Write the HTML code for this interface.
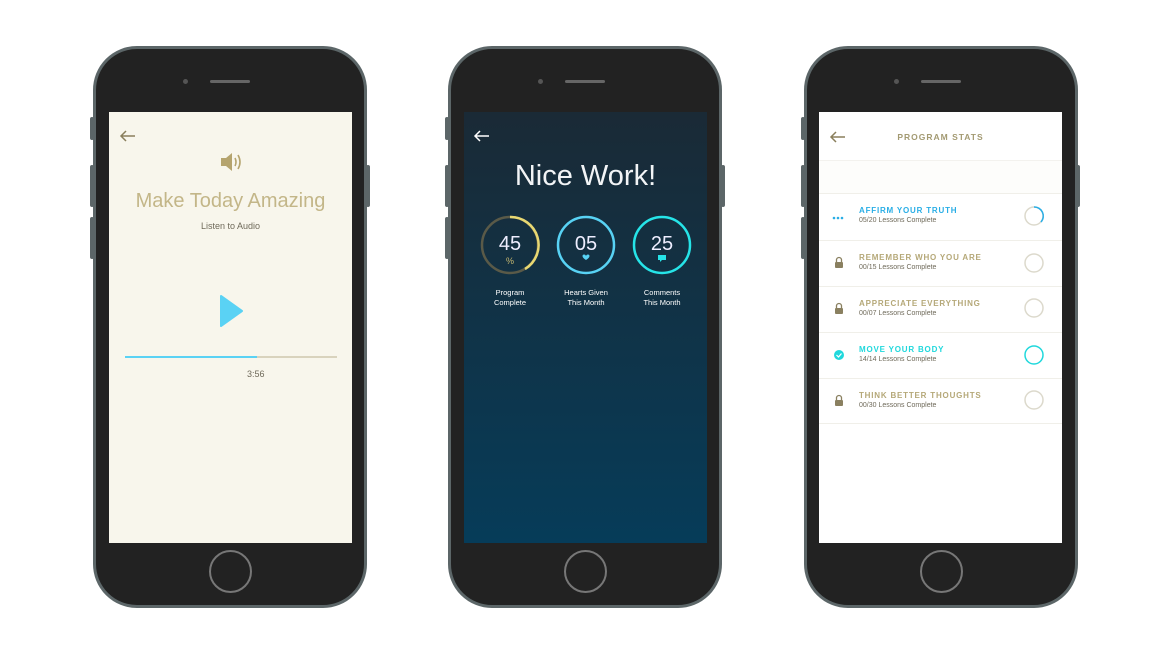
<!DOCTYPE html>
<html><head><meta charset="utf-8"><style>
*{margin:0;padding:0;box-sizing:border-box}
body{width:1170px;height:650px;background:#fff;position:relative;overflow:hidden;font-family:"Liberation Sans",sans-serif}
.ph{position:absolute;top:46px;width:274px;height:562px;background:#222;border:3px solid #5c6668;border-radius:44px}
.btn{position:absolute;width:4px;background:#5c6668;border-radius:2px}
.cam{position:absolute;top:30px;left:87px;width:5px;height:5px;border-radius:50%;background:#555}
.spk{position:absolute;top:31px;left:114px;width:40px;height:3px;border-radius:2px;background:#666}
.home{position:absolute;top:501px;left:113px;width:43px;height:43px;border-radius:50%;border:2px solid #777}
.scr{position:absolute;top:63px;left:13px;width:243px;height:431px;overflow:hidden}
.abs{position:absolute}
.gold{color:#b5a878}
</style></head><body>

<!-- phone 1 -->
<div class="btn" style="left:90px;top:117px;height:23px"></div>
<div class="btn" style="left:90px;top:165px;height:42px"></div>
<div class="btn" style="left:90px;top:217px;height:42px"></div>
<div class="btn" style="left:366px;top:165px;height:42px"></div>
<div class="ph" style="left:93px">
<div class="cam"></div><div class="spk"></div><div class="home"></div>
<div class="scr" style="background:#f8f6ec">
 <svg class="abs" style="left:10px;top:17px" width="18" height="14" viewBox="0 0 18 14"><path d="M16 7H2M7 2L2 7l5 5" fill="none" stroke="#8a7f5c" stroke-width="1.5"/></svg>
 <svg class="abs" style="left:110px;top:39px" width="24" height="22" viewBox="0 0 24 22"><path d="M2 7h5l6-5v18l-6-5H2z" fill="#b5a46e"/><path d="M16 7q2 4 0 8M19 4q4 7 0 14" fill="none" stroke="#b5a46e" stroke-width="1.6"/></svg>
 <div class="abs gold" style="left:0;width:243px;top:78px;text-align:center;font-size:20px;color:#c3b688">Make Today Amazing</div>
 <div class="abs" style="left:0;width:243px;top:109px;text-align:center;font-size:9px;color:#6f6a5a">Listen to Audio</div>
 <svg class="abs" style="left:110px;top:182px" width="25" height="34" viewBox="0 0 25 34"><path d="M2 2L23 17L2 32z" fill="#5ad2f4" stroke="#5ad2f4" stroke-width="2" stroke-linejoin="round"/></svg>
 <div class="abs" style="left:16px;top:244px;width:212px;height:2px;background:#d9d3bd"></div>
 <div class="abs" style="left:16px;top:244px;width:132px;height:2px;background:#5ad2f4"></div>
 <div class="abs" style="left:138px;top:257px;font-size:9px;color:#6f6a5a">3:56</div>
</div></div>

<!-- phone 2 -->
<div class="btn" style="left:445px;top:117px;height:23px"></div>
<div class="btn" style="left:445px;top:165px;height:42px"></div>
<div class="btn" style="left:445px;top:217px;height:42px"></div>
<div class="btn" style="left:721px;top:165px;height:42px"></div>
<div class="ph" style="left:448px">
<div class="cam"></div><div class="spk"></div><div class="home"></div>
<div class="scr" style="background:linear-gradient(#1a2a36,#063c59)">
 <svg class="abs" style="left:9px;top:17px" width="18" height="14" viewBox="0 0 18 14"><path d="M16 7H2M7 2L2 7l5 5" fill="none" stroke="#fff" stroke-width="1.5"/></svg>
 <div class="abs" style="left:0;width:243px;top:48px;text-align:center;font-size:29px;color:#f2f4f6">Nice Work!</div>
 <svg class="abs" style="left:0;top:0" width="243" height="200">
  <circle cx="46" cy="133" r="28" fill="none" stroke="#5a5a48" stroke-width="2.5"/>
  <path d="M46 105A28 28 0 0 1 61 157" fill="none" stroke="#e8d872" stroke-width="2.5"/>
  <circle cx="122" cy="133" r="28" fill="none" stroke="#58d2f4" stroke-width="2.5"/>
  <circle cx="198" cy="133" r="28" fill="none" stroke="#26e4e8" stroke-width="2.5"/>
  <text x="46" y="138" text-anchor="middle" font-size="20" fill="#eef" font-family="Liberation Sans">45</text>
  <text x="46" y="152" text-anchor="middle" font-size="9" fill="#c8b870" font-family="Liberation Sans">%</text>
  <text x="122" y="138" text-anchor="middle" font-size="20" fill="#eef" font-family="Liberation Sans">05</text>
  <path d="M118.5 144c0-2 3-2 3.5 0c.5-2 3.5-2 3.5 0c0 2-3.5 4-3.5 4s-3.5-2-3.5-4z" fill="#58d2f4"/>
  <text x="198" y="138" text-anchor="middle" font-size="20" fill="#eef" font-family="Liberation Sans">25</text>
  <path d="M194 143h8v5h-4l-2 2v-2h-2z" fill="#26e4e8"/>
 </svg>
 <div class="abs" style="left:16px;width:60px;top:176px;text-align:center;font-size:7.5px;line-height:10px;color:#fff">Program<br>Complete</div>
 <div class="abs" style="left:87px;width:70px;top:176px;text-align:center;font-size:7.5px;line-height:10px;color:#fff">Hearts Given<br>This Month</div>
 <div class="abs" style="left:163px;width:70px;top:176px;text-align:center;font-size:7.5px;line-height:10px;color:#fff">Comments<br>This Month</div>
</div></div>

<!-- phone 3 -->
<div class="btn" style="left:801px;top:117px;height:23px"></div>
<div class="btn" style="left:801px;top:165px;height:42px"></div>
<div class="btn" style="left:801px;top:217px;height:42px"></div>
<div class="btn" style="left:1076px;top:165px;height:42px"></div>
<div class="ph" style="left:804px">
<div class="cam"></div><div class="spk"></div><div class="home"></div>
<div class="scr" style="background:#fff;left:12px">
 <svg class="abs" style="left:10px;top:18px" width="18" height="14" viewBox="0 0 18 14"><path d="M16 7H2M7 2L2 7l5 5" fill="none" stroke="#8a7f5c" stroke-width="1.5"/></svg>
 <div class="abs" style="left:0;width:243px;top:20px;text-align:center;font-size:8.5px;font-weight:bold;letter-spacing:1px;color:#a39a72">PROGRAM STATS</div>
 <div class="abs" style="left:0;top:48px;width:243px;height:34px;background:#fdfdfb;border-top:1px solid #f3f2ee;border-bottom:1px solid #f0efe9"></div>
 <svg class="abs" style="left:0;top:0" width="243" height="320">
  <g fill="#29aee6"><circle cx="15" cy="106" r="1.3"/><circle cx="19" cy="106" r="1.3"/><circle cx="23" cy="106" r="1.3"/></g>
  <g fill="#8a8060">
   <rect x="16" y="150" width="8" height="6" rx="1"/><path d="M17.5 150v-2a2.5 2.5 0 0 1 5 0v2" fill="none" stroke="#8a8060" stroke-width="1.3"/>
   <rect x="16" y="196" width="8" height="6" rx="1"/><path d="M17.5 196v-2a2.5 2.5 0 0 1 5 0v2" fill="none" stroke="#8a8060" stroke-width="1.3"/>
   <rect x="16" y="288" width="8" height="6" rx="1"/><path d="M17.5 288v-2a2.5 2.5 0 0 1 5 0v2" fill="none" stroke="#8a8060" stroke-width="1.3"/>
  </g>
  <circle cx="20" cy="243" r="5" fill="#20d8dc"/><path d="M17.5 243l2 2 3-3.5" fill="none" stroke="#fff" stroke-width="1.2"/>
  <g fill="none" stroke-width="1.5">
   <circle cx="215" cy="104" r="9" stroke="#dcd9cc"/><path d="M215 95A9 9 0 0 1 222 110" stroke="#29aee6"/>
   <circle cx="215" cy="151" r="9" stroke="#dcd9cc"/>
   <circle cx="215" cy="196" r="9" stroke="#dcd9cc"/>
   <circle cx="215" cy="243" r="9" stroke="#20d8dc"/>
   <circle cx="215" cy="288" r="9" stroke="#dcd9cc"/>
  </g>
  <g stroke="#f0efe9"><line x1="0" y1="128.5" x2="243" y2="128.5"/><line x1="0" y1="174.5" x2="243" y2="174.5"/><line x1="0" y1="220.5" x2="243" y2="220.5"/><line x1="0" y1="266.5" x2="243" y2="266.5"/><line x1="0" y1="311.5" x2="243" y2="311.5"/></g>
 </svg>
 <div class="abs" style="left:40px;top:94px;font-size:8px;font-weight:bold;letter-spacing:.8px;color:#29aee6">AFFIRM YOUR TRUTH</div>
 <div class="abs" style="left:40px;top:105px;font-size:7px;color:#6f6a5a">05/20 Lessons Complete</div>
 <div class="abs" style="left:40px;top:141px;font-size:8px;font-weight:bold;letter-spacing:.8px;color:#b5a878">REMEMBER WHO YOU ARE</div>
 <div class="abs" style="left:40px;top:152px;font-size:7px;color:#6f6a5a">00/15 Lessons Complete</div>
 <div class="abs" style="left:40px;top:187px;font-size:8px;font-weight:bold;letter-spacing:.8px;color:#b5a878">APPRECIATE EVERYTHING</div>
 <div class="abs" style="left:40px;top:198px;font-size:7px;color:#6f6a5a">00/07 Lessons Complete</div>
 <div class="abs" style="left:40px;top:233px;font-size:8px;font-weight:bold;letter-spacing:.8px;color:#20d8dc">MOVE YOUR BODY</div>
 <div class="abs" style="left:40px;top:244px;font-size:7px;color:#6f6a5a">14/14 Lessons Complete</div>
 <div class="abs" style="left:40px;top:279px;font-size:8px;font-weight:bold;letter-spacing:.8px;color:#b5a878">THINK BETTER THOUGHTS</div>
 <div class="abs" style="left:40px;top:290px;font-size:7px;color:#6f6a5a">00/30 Lessons Complete</div>
</div></div>
</body></html>
